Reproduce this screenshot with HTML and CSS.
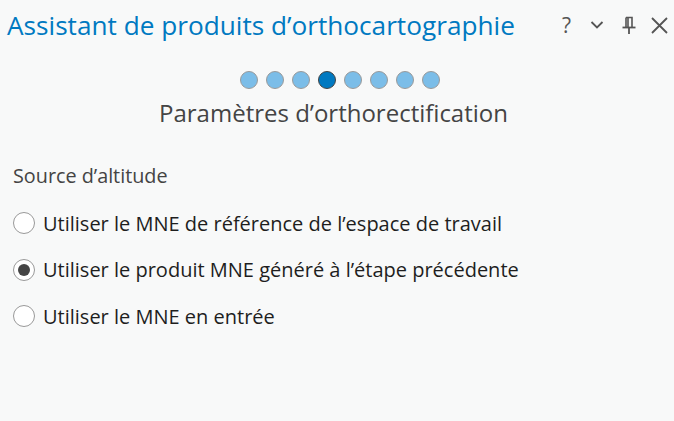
FILE: index.html
```html
<!DOCTYPE html>
<html lang="fr">
<head>
    <meta charset="UTF-8">
    <title>Assistant de produits d'orthocartographie</title>
    <link rel="stylesheet" href="styles.css">
</head>
<body>
    <div class="pane">
        <div class="pane-header">
            <h1 class="pane-title">Assistant de produits d’orthocartographie</h1>
            <div class="pane-tools">
                <span class="tool tool-help">?</span>
                <svg class="tool tool-menu" width="14" height="16" viewBox="0 0 14 16">
                    <path d="M1.5 5 L7 10.5 L12.5 5" fill="none" stroke="#555" stroke-width="1.8"/>
                </svg>
                <svg class="tool tool-pin" width="14" height="18" viewBox="0 0 14 18">
                    <path d="M4 1.5 H10 V11 M4 1.5 V11 M6 1.5 V11" fill="none" stroke="#555" stroke-width="1.6"/>
                    <path d="M0.5 11.5 H13.5" stroke="#555" stroke-width="1.8"/>
                    <path d="M7 11.5 V18" stroke="#555" stroke-width="1.8"/>
                </svg>
                <svg class="tool tool-close" width="17" height="17" viewBox="0 0 17 17">
                    <path d="M1 1 L16 16 M16 1 L1 16" stroke="#555" stroke-width="1.8"/>
                </svg>
            </div>
        </div>

        <div class="steps">
            <span class="step"></span>
            <span class="step"></span>
            <span class="step"></span>
            <span class="step active"></span>
            <span class="step"></span>
            <span class="step"></span>
            <span class="step"></span>
            <span class="step"></span>
        </div>
        <h2 class="step-title">Paramètres d’orthorectification</h2>

        <div class="section">
            <div class="section-label">Source d’altitude</div>
            <label class="radio-row">
                <span class="radio"></span>
                <span>Utiliser le MNE de référence de l’espace de travail</span>
            </label>
            <label class="radio-row">
                <span class="radio checked"></span>
                <span>Utiliser le produit MNE généré à l’étape précédente</span>
            </label>
            <label class="radio-row">
                <span class="radio"></span>
                <span>Utiliser le MNE en entrée</span>
            </label>
        </div>
    </div>
</body>
</html>
```

FILE: styles.css
```css
* {
    margin: 0;
    padding: 0;
    box-sizing: border-box;
}

body {
    font-family: 'Open Sans', 'Noto Sans', sans-serif;
    background: #f8f9f9;
    color: #222;
    min-height: 100vh;
}

.pane {
    width: 674px;
}

.pane-header {
    display: flex;
    align-items: center;
    justify-content: space-between;
    height: 50px;
    padding: 0 6px 0 7px;
}

.pane-title {
    font-size: 26.2px;
    font-weight: normal;
    color: #0079c1;
}

.pane-tools {
    display: flex;
    align-items: center;
}

.tool-help {
    font-size: 21px;
    color: #555;
    line-height: 1;
    margin-right: 19px;
}

.tool-menu {
    margin-right: 18px;
}

.tool-pin {
    margin-right: 15px;
}

.steps {
    display: flex;
    justify-content: center;
    gap: 8px;
    margin: 21px 0 0 6px;
}

.step {
    width: 18px;
    height: 18px;
    border-radius: 50%;
    background: #7bbde8;
    border: 1.5px solid #9a9a9a;
}

.step.active {
    background: #0079c1;
    border-color: #444;
}

.step-title {
    font-size: 24px;
    line-height: 30px;
    font-weight: normal;
    color: #444;
    text-align: center;
    margin-top: 9px;
    padding-right: 7px;
}

.section {
    padding: 0 13px;
    margin-top: 36px;
}

.section-label {
    font-size: 19.8px;
    line-height: 24px;
    color: #444;
    margin-bottom: 12px;
}

.radio-row {
    display: flex;
    align-items: center;
    gap: 8px;
    font-size: 20px;
    color: #1e1e1e;
    height: 46.5px;
}

.radio {
    width: 22px;
    height: 22px;
    border-radius: 50%;
    border: 1.5px solid #999;
    background: #fff;
    display: flex;
    align-items: center;
    justify-content: center;
    flex-shrink: 0;
}

.radio.checked::after {
    content: "";
    width: 12px;
    height: 12px;
    border-radius: 50%;
    background: #444;
}
```
